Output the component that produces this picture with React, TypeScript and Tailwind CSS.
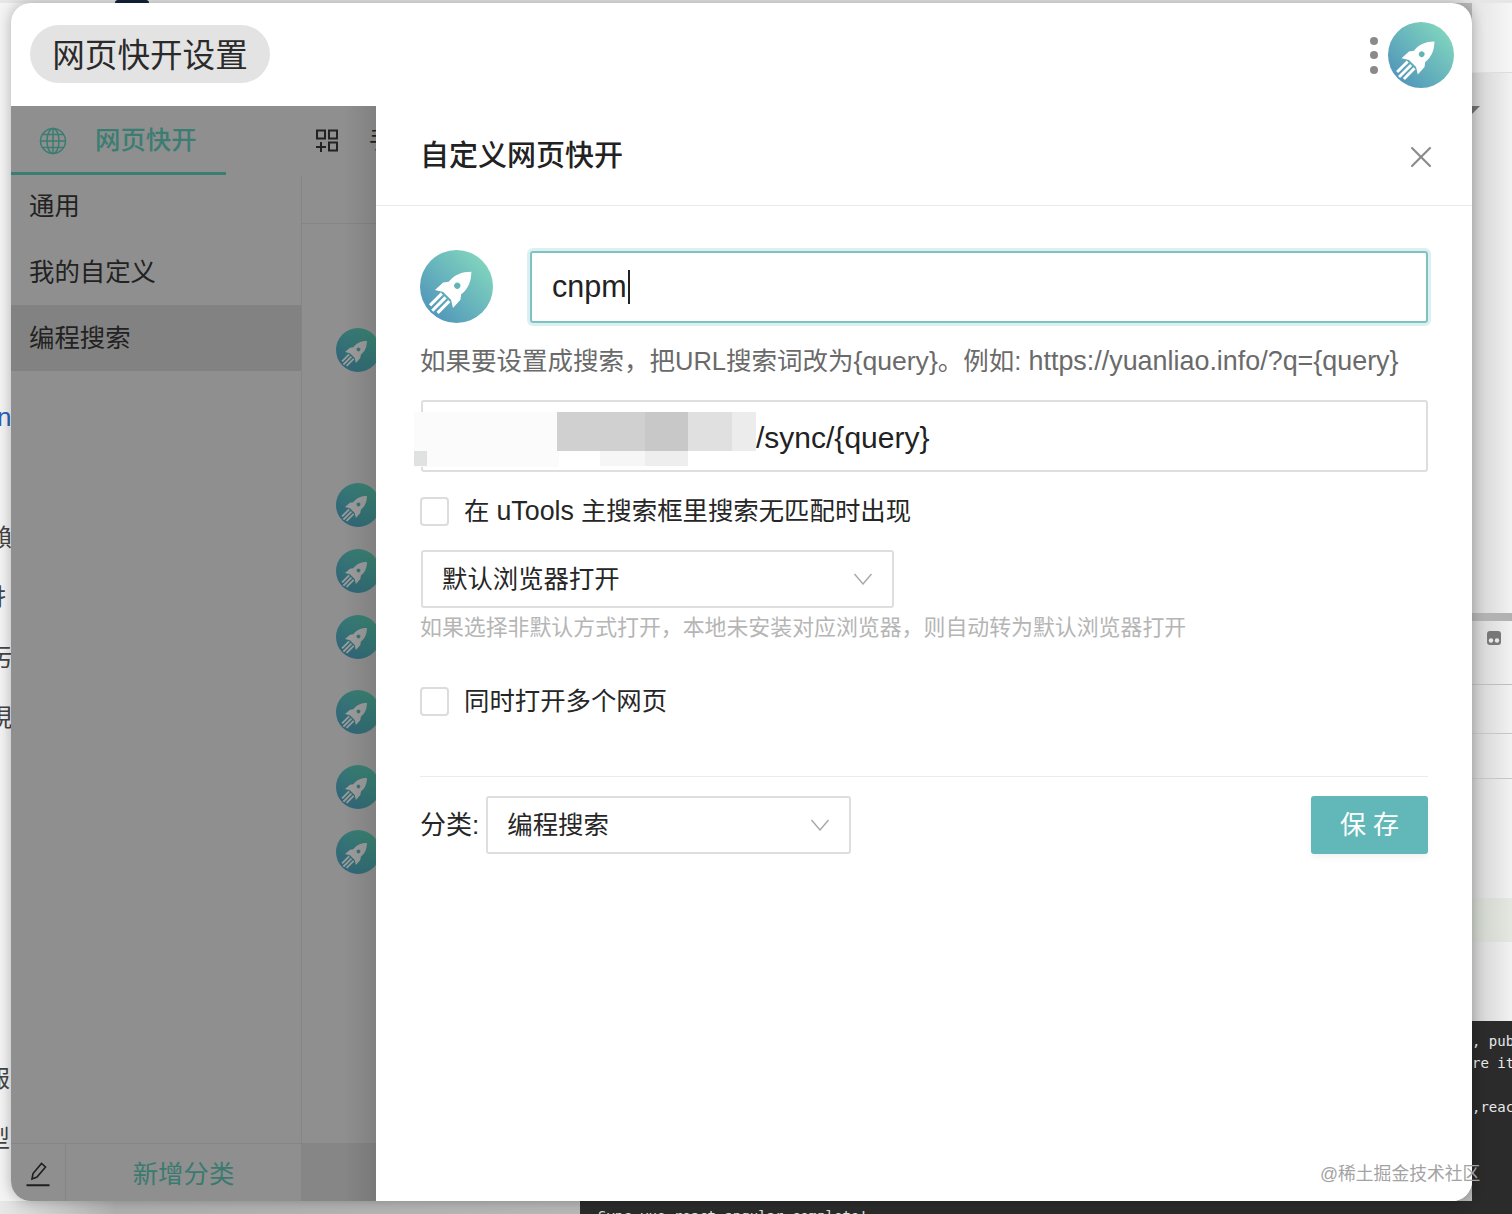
import React from 'react';
import { X } from 'lucide-react';

const stack = "font-['Liberation_Sans','Noto_Sans_CJK_SC',sans-serif]";

// rocket logo; the dim variant sits under the drawer's mask
const Rocket = ({ dim = false, className = '' }: { dim?: boolean; className?: string }) => (
    <div
        className={`shrink-0 rounded-full overflow-hidden bg-linear-to-bl ${
            dim ? 'from-[#3d8a72] to-[#2f5f78]' : 'from-[#8adfbd] to-[#4a8cb8]'
        } ${className}`}
    >
        <svg viewBox="0 0 66 66" className="w-full h-full">
            <g transform="rotate(45 33 33)" fill={dim ? '#9c9c9c' : '#ffffff'}>
                <path d="M33 14C39 20 42 27 41 35L44 39L44.5 49L38 45H28L21.5 49L22 39L25 35C24 27 27 20 33 14Z" />
                <rect x="26.8" y="47" width="2.8" height="15" />
                <rect x="31.6" y="47" width="2.8" height="17" />
                <rect x="36.4" y="47" width="2.8" height="15" />
                <circle cx="33" cy="32" r="2.8" fill={dim ? '#35747a' : '#63b5b5'} />
            </g>
        </svg>
    </div>
);

const Chevron = () => (
    <svg viewBox="0 0 20 12" className="w-5 h-3 shrink-0" fill="none" stroke="#a8a8a8" strokeWidth="1.4">
        <path d="M1.5 1L10 11L18.5 1" />
    </svg>
);

const Checkbox = () => <div className="w-[29px] h-[29px] shrink-0 rounded-[4px] border-2 border-[#dcdcdc] bg-white" />;

const categories = [
    { label: '通用' },
    { label: '我的自定义' },
    { label: '编程搜索', active: true },
];

const rocketRows = ['mt-[104px]', 'mt-[111px]', 'mt-[22px]', 'mt-[22px]', 'mt-[31px]', 'mt-[31px]', 'mt-[21px]'];

const LeftPane = () => (
    <div className="relative w-[365px] shrink-0 flex flex-col bg-[#8f8f8f] overflow-hidden">
        <div className="h-[69px] flex shrink-0">
            <div className="w-[215px] shrink-0 flex items-center pl-[28px] pt-[3px] gap-[28px] border-b-[3px] border-[#3b7d72]">
                <svg viewBox="0 0 28 28" className="w-[28px] h-[28px] shrink-0" fill="none" stroke="#3b7d72" strokeWidth="1.5">
                    <circle cx="14" cy="14" r="12.5" />
                    <ellipse cx="14" cy="14" rx="6" ry="12.5" />
                    <path d="M14 1.5V26.5M1.5 14H26.5M3.5 7.5H24.5M3.5 20.5H24.5" />
                </svg>
                <span className="text-[25.4px] font-medium text-[#3b7d72]">网页快开</span>
            </div>
            <div className="flex items-center pl-[89px] gap-[30px] whitespace-nowrap text-[#222222]">
                <svg viewBox="0 0 24 24" className="w-6 h-6 shrink-0" fill="none" stroke="#222222" strokeWidth="2">
                    <rect x="2" y="1.5" width="8" height="8" />
                    <rect x="14" y="1.5" width="8" height="8" />
                    <rect x="14" y="13.5" width="8" height="8" />
                    <path d="M1 18H11M6 13V23" />
                </svg>
                <span className="text-[25px]">手动</span>
            </div>
        </div>
        <div className="flex-1 flex min-h-0">
            <div className="w-[291px] shrink-0 border-r border-[#858585]">
                <div className="-mt-[2px]">
                    {categories.map((c) => (
                        <div
                            key={c.label}
                            className={`h-[66px] flex items-center pl-[18px] text-[25.4px] text-[#222222] ${
                                c.active ? 'bg-[#828282]' : ''
                            }`}
                        >
                            {c.label}
                        </div>
                    ))}
                </div>
            </div>
            <div className="flex-1 relative">
                <div className="h-[49px] border-b border-[#858585]" />
                <div className="flex flex-col pl-[34px]">
                    {rocketRows.map((mt, i) => (
                        <Rocket key={i} dim className={`w-[44px] h-[44px] ${mt}`} />
                    ))}
                </div>
            </div>
        </div>
        <div className="h-[58px] shrink-0 flex border-t border-[#858585]">
            <div className="w-[55px] shrink-0 flex items-center justify-center border-r border-[#858585] pt-[2px]">
                <svg viewBox="0 0 26 26" className="w-[26px] h-[26px]" fill="none" stroke="#1f1f1f" strokeWidth="1.6">
                    <path d="M7 18L8 12.5L16.5 2.5L20.5 6L12 16Z" />
                    <path d="M1.5 24.2H24.5" strokeWidth="2" />
                </svg>
            </div>
            <div className="w-[235px] shrink-0 flex items-center justify-center pt-[3px] text-[25.4px] text-[#3b7a70]">新增分类</div>
            <div className="flex-1 bg-[#868686] border-l border-[#858585]" />
        </div>
        {/* shadow the drawer throws on the masked page */}
        <div className="absolute top-0 bottom-0 right-0 w-8 bg-linear-to-r from-transparent to-black/10" />
    </div>
);

const SelectBox = ({ label, className }: { label: string; className: string }) => (
    <div className={`h-[58px] rounded-[3px] border-2 border-[#dedede] flex items-center justify-between pl-[19px] pr-[19px] text-[25.4px] text-[#262626] ${className}`}>
        <span>{label}</span>
        <Chevron />
    </div>
);

const Drawer = () => (
    <div className="flex-1 min-w-0 flex flex-col bg-white">
        <div className="h-[100px] shrink-0 flex items-center justify-between border-b border-[#ececec] pl-[44px] pr-[33px] pt-[2px]">
            <span className="text-[29px] font-medium text-[#222222]">自定义网页快开</span>
            <X size={36} strokeWidth={1.4} className="text-[#8a8a8a]" />
        </div>
        <div className="pt-[44px] pl-[44px] pr-[44px]">
            <div className="flex items-center gap-[37px]">
                <Rocket className="w-[73px] h-[73px]" />
                <div className="flex-1 h-[72px] mt-[1px] rounded-[3px] border-2 border-[#7cc4c4] shadow-[0_0_0_3px_#dcf0f0] flex items-center pl-[20px] text-[30.5px] text-[#222222]">
                    cnpm
                    <span className="w-[2px] h-[34px] bg-[#222222] ml-[1px]" />
                </div>
            </div>
            <p className="mt-[20px] h-[36px] leading-[36px] text-[25.5px] text-[#6a6a6a] whitespace-nowrap">
                如果要设置成搜索，把URL搜索词改为<span className="text-[26.6px]">{'{query}'}</span>。例如:{' '}
                <span className="text-[26.9px]">https://yuanliao.info/?q={'{query}'}</span>
            </p>
            <div className="relative mt-[21px] ml-[1px] h-[72px] rounded-[3px] border-2 border-[#dedede] flex items-center pl-[333px] pt-[2px] text-[30px] text-[#222222]">
                /sync/{'{query}'}
                {/* mosaic that hides the host name */}
                <div className="absolute left-[-9px] top-[10px] w-[145px] h-[55px] bg-[#fbfbfb]" />
                <div className="absolute left-[-9px] top-[49px] w-[13px] h-[15px] bg-[#e0e2e2]" />
                <div className="absolute left-[134px] top-[10px] w-[88px] h-[39px] bg-[#d0d0d0]" />
                <div className="absolute left-[222px] top-[10px] w-[43px] h-[39px] bg-[#c8c8c8]" />
                <div className="absolute left-[265px] top-[10px] w-[44px] h-[39px] bg-[#e0e0e0]" />
                <div className="absolute left-[309px] top-[10px] w-[24px] h-[39px] bg-[#ececec]" />
                <div className="absolute left-[177px] top-[49px] w-[45px] h-[15px] bg-[#f6f6f6]" />
                <div className="absolute left-[222px] top-[49px] w-[43px] h-[15px] bg-[#eeeeee]" />
            </div>
            <div className="mt-[25px] flex items-center gap-[15px] text-[25.4px] text-[#262626]">
                <Checkbox />
                <span className="h-[29px] leading-[29px]">
                    在 <span className="text-[26.8px]">uTools</span> 主搜索框里搜索无匹配时出现
                </span>
            </div>
            <SelectBox label="默认浏览器打开" className="mt-[24px] ml-[1px] w-[473px]" />
            <p className="mt-[5px] h-[30px] leading-[30px] text-[21.9px] text-[#b5b5b5] whitespace-nowrap">
                如果选择非默认方式打开，本地未安装对应浏览器，则自动转为默认浏览器打开
            </p>
            <div className="mt-[44px] flex items-center gap-[15px] text-[25.4px] text-[#262626]">
                <Checkbox />
                <span className="h-[29px] leading-[29px]">同时打开多个网页</span>
            </div>
            <div className="mt-[60px] h-px bg-[#ececec]" />
            <div className="mt-[19px] flex items-center">
                <span className="text-[26px] text-[#262626] whitespace-nowrap pt-[1px]">分类:</span>
                <SelectBox label="编程搜索" className="ml-[7px] w-[365px]" />
                <button className="ml-auto w-[117px] h-[58px] rounded-[3px] bg-[#62b8b8] text-white text-[26px] shadow-[0_3px_6px_rgba(0,0,0,0.06)]">
                    保 存
                </button>
            </div>
        </div>
    </div>
);

const Window = () => (
    <div className="absolute left-[11px] top-[3px] w-[1461px] h-[1198px] flex flex-col bg-white rounded-[20px] overflow-hidden shadow-[0_0_14px_rgba(0,0,0,0.28)]">
        <div className="h-[103px] shrink-0 flex items-start pl-[19px] pr-[18px] pt-[19px]">
            <div className="mt-[3px] h-[58px] w-[240px] rounded-full bg-[#e3e3e3] flex items-center justify-center pt-[4px] text-[32.6px] text-[#2a2a2a]">
                网页快开设置
            </div>
            <div className="ml-auto flex items-center gap-[10px]">
                <div className="flex flex-col gap-[6.5px]">
                    <span className="w-2 h-2 rounded-full bg-[#8a8a8a]" />
                    <span className="w-2 h-2 rounded-full bg-[#8a8a8a]" />
                    <span className="w-2 h-2 rounded-full bg-[#8a8a8a]" />
                </div>
                <Rocket className="w-[66px] h-[66px]" />
            </div>
        </div>
        <div className="flex-1 min-h-0 flex">
            <LeftPane />
            <Drawer />
        </div>
    </div>
);

// what shows of the page behind, on the left edge
const LeftStrip = () => (
    <div className="w-[11px] h-full overflow-hidden pt-[400px] text-[#444444] text-[24px] leading-[34px] whitespace-nowrap">
        <div className="h-[121px] text-[#2a62b8] -ml-[3px] text-[26px]">n</div>
        <div className="h-[60px] -ml-[12px]">賴</div>
        <div className="h-[60px] -ml-[7px]">扌</div>
        <div className="h-[60px] -ml-[12px]">圬</div>
        <div className="h-[361px] -ml-[12px]">現</div>
        <div className="h-[60px] -ml-[14px]">報</div>
        <div className="h-[60px] -ml-[14px]">型</div>
    </div>
);

const RightStrip = () => (
    <div className="w-[40px] h-full flex flex-col bg-linear-to-r from-[#cfcfcf] to-[#f2f2f2]">
        <div className="h-[72px] bg-linear-to-r from-[#e4e4e4] to-[#f6f6f6]" />
        <div className="h-[74px] border-t border-[#dddddd] pt-[33px]">
            <div className="w-0 h-0 border-r-[8px] border-t-[8px] border-r-transparent border-t-[#6f6f6f]" />
        </div>
        <div className="h-[467px]" />
        <div className="h-[8px] bg-[#b2b2b2]" />
        <div className="h-[64px] border-b border-[#bdbdbd] pl-[15px] pt-[10px]">
            <svg viewBox="0 0 14 14" className="w-[14px] h-[14px]">
                <rect width="14" height="14" rx="3" fill="#777777" />
                <circle cx="4" cy="9.5" r="2.2" fill="#e8e8e8" />
                <circle cx="10" cy="9.5" r="2.2" fill="#e8e8e8" />
            </svg>
        </div>
        <div className="h-[49px] border-b border-[#c6c6c6]" />
        <div className="h-[45px] border-b border-[#c6c6c6]" />
        <div className="h-[119px]" />
        <div className="h-[44px] bg-linear-to-r from-[#cbd0c8] to-[#e4e8e0]" />
        <div className="h-[79px]" />
        <div className="flex-1 bg-[#2b2b2b] pt-[9px] font-['DejaVu_Sans_Mono',monospace] text-[14px] leading-[22px] text-[#e8e8e8] whitespace-nowrap overflow-hidden">
            <div>, pub</div>
            <div>re it</div>
            <div className="h-[22px]" />
            <div>,reac</div>
        </div>
    </div>
);

const App: React.FC = () => {
    return (
        <div className={`relative w-[1512px] h-[1214px] overflow-hidden bg-linear-to-r from-[#f4f4f4] to-[#b8b8b8] ${stack}`}>
            <div className="flex h-full justify-between">
                <LeftStrip />
                <RightStrip />
            </div>
            {/* top edge of the page behind */}
            <div className="absolute left-0 right-0 top-0 h-[3px] bg-[#e6e6e6]">
                <div className="ml-[115px] w-[34px] h-[3px] rounded-t-full bg-[#14233a]" />
            </div>
            {/* bottom edge: page behind, then the terminal */}
            <div className="absolute left-0 right-0 bottom-0 h-[13px] flex">
                <div className="w-[580px] shrink-0 bg-linear-to-r from-[#e8e8e8] via-[#b0b0b0] via-20% to-[#b8b8b8]" />
                <div className="flex-1 bg-[#2b2b2b] pl-[18px] pt-[7px] font-['DejaVu_Sans_Mono',monospace] text-[14px] leading-[16px] text-[#e0e0e0] whitespace-nowrap overflow-hidden">
                    Sync vue react angular complete!
                </div>
            </div>
            <Window />
            {/* site watermark on top of the capture */}
            <div className="absolute left-[1320px] top-[1162px] text-[17.8px] leading-[24px] text-[#a3a3a3] whitespace-nowrap">
                @稀土掘金技术社区
            </div>
        </div>
    );
};

export default App;
